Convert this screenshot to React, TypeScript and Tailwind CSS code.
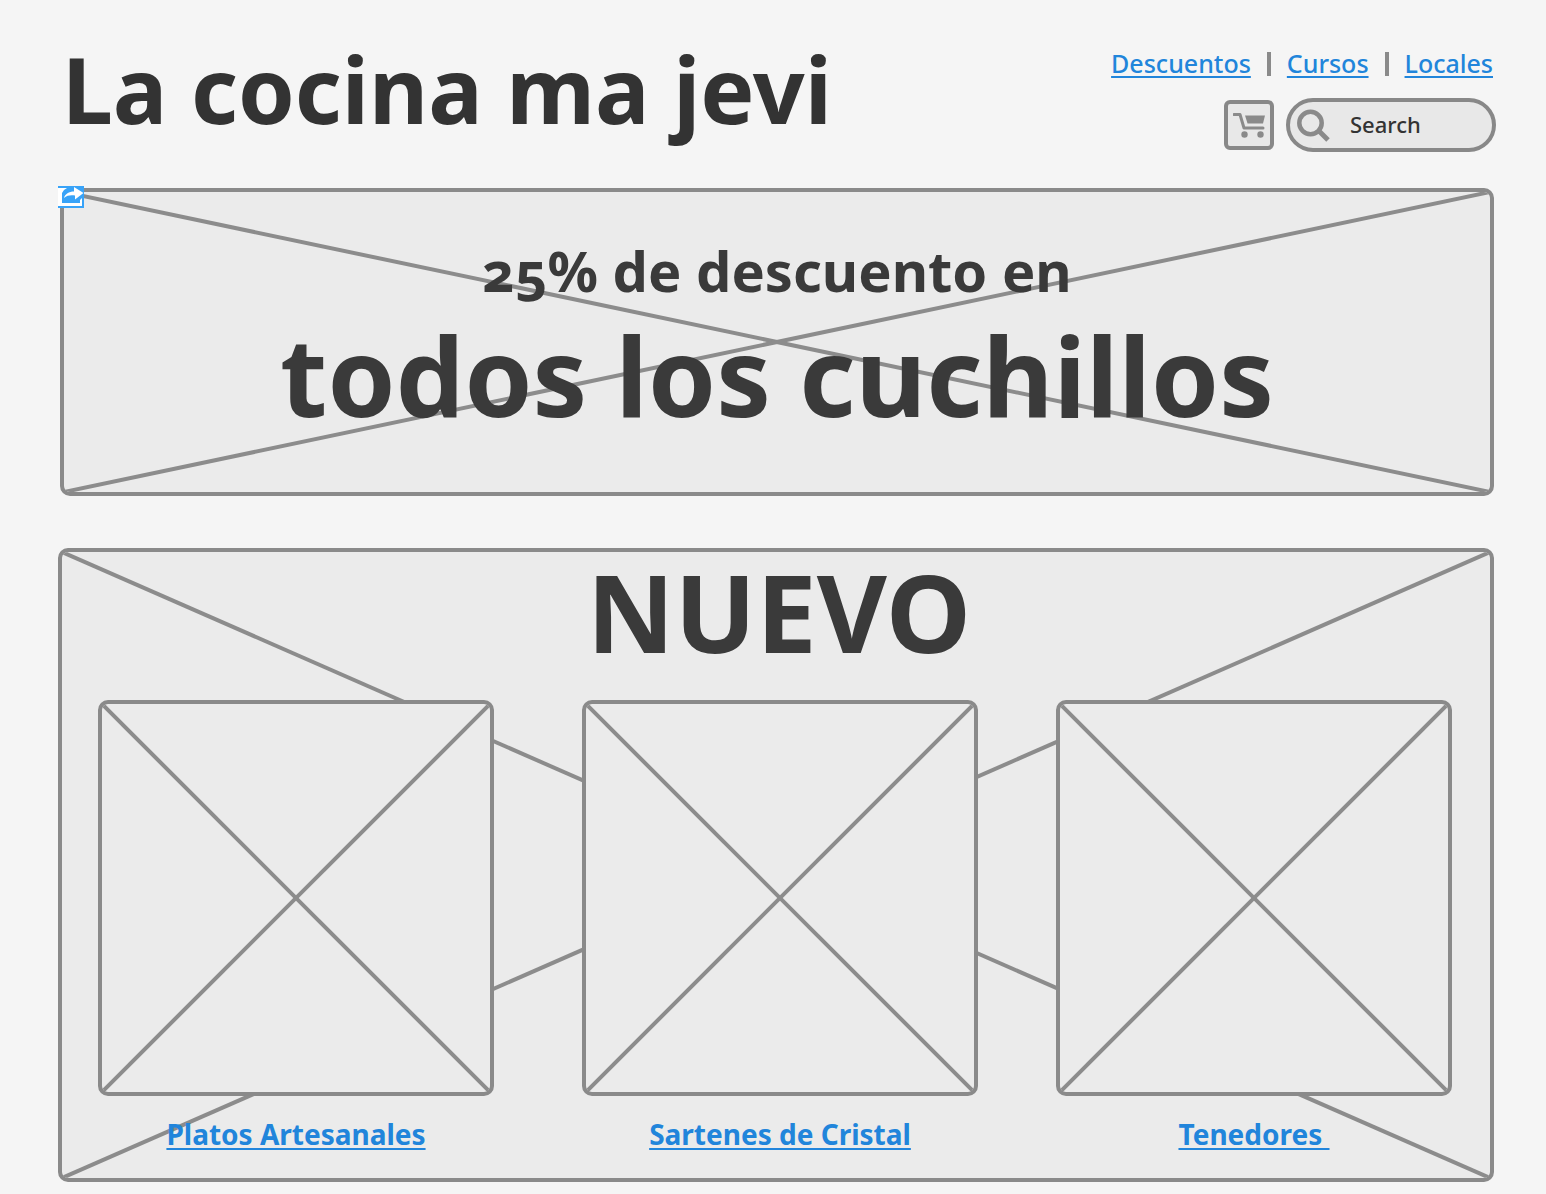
import React from "react";

function Placeholder({ className = "", children }: { className?: string; children?: React.ReactNode }) {
  return (
    <div className={`relative rounded-[10px] border-4 border-[#8a8a8a] bg-[#ebebeb] ${className}`}>
      <svg
        className="absolute inset-0 h-full w-full rounded-md"
        viewBox="0 0 100 100"
        preserveAspectRatio="none"
        stroke="#8c8c8c"
        strokeWidth="4"
        aria-hidden="true"
      >
        <line x1="0" y1="0" x2="100" y2="100" vectorEffect="non-scaling-stroke" />
        <line x1="0" y1="100" x2="100" y2="0" vectorEffect="non-scaling-stroke" />
      </svg>
      {children && <div className="relative">{children}</div>}
    </div>
  );
}

function ShareBadge() {
  return (
    <svg className="absolute -top-0.5 -left-0.5 h-[22px] w-[26px]" viewBox="0 0 26 22" aria-hidden="true">
      <rect width="26" height="22" fill="#38a3f8" />
      <path d="M0 2H9L6 4L4 7V17H22V14L24 12V20H0Z" fill="#fff" />
      <path d="M6 12C7 8 11 5.500 16 5.500V1L25.500 7L17 13.500V9.500C12 9 9 9.500 6 12Z" fill="#fff" />
    </svg>
  );
}

function CartIcon() {
  return (
    <svg width="32" height="26" viewBox="0 0 32 26" fill="#8a8a8a" aria-hidden="true">
      <path d="M1 2.500H7L11 16H30" fill="none" stroke="#8a8a8a" strokeWidth="3" strokeLinecap="round" strokeLinejoin="round" />
      <path d="M12 3.500H32L30 11.500H14.500Z" />
      <circle cx="11.500" cy="22.500" r="3.200" />
      <circle cx="27.500" cy="22.500" r="3.200" />
    </svg>
  );
}

function SearchIcon() {
  return (
    <svg width="34" height="34" viewBox="0 0 34 34" fill="none" stroke="#8a8a8a" aria-hidden="true">
      <circle cx="14.500" cy="15" r="11.200" strokeWidth="4.500" />
      <path d="M22 22L32 32" strokeWidth="5" />
    </svg>
  );
}

const link = "text-[#2185db] underline decoration-2 underline-offset-3";

const products = [
  { name: "Platos Artesanales", place: "col-start-1" },
  { name: "Sartenes de Cristal", place: "col-start-3" },
  { name: "Tenedores ", place: "col-start-5" },
];

export default function App() {
  return (
    <div className="min-h-screen bg-[#f5f5f5] pt-10 pb-3 font-['Noto_Sans',sans-serif] text-[#333333]">
      <header className="flex h-[148px] items-start justify-between pr-[50px] pl-[62px]">
        <h1 className="text-[91px] leading-[98px] font-bold whitespace-nowrap">La cocina ma jevi</h1>
        <div className="flex flex-col items-end">
          <nav className="flex h-12 items-center gap-4 pr-[3px] text-[25px] font-medium">
            <a href="#descuentos" className={link}>Descuentos</a>
            <span className="h-6 w-1 bg-[#8a8a8a]" />
            <a href="#cursos" className={link}>Cursos</a>
            <span className="h-6 w-1 bg-[#8a8a8a]" />
            <a href="#locales" className={link}>Locales</a>
          </nav>
          <div className="mt-2.5 flex items-center gap-3">
            <button
              type="button"
              aria-label="Carrito"
              className="flex size-[50px] items-center justify-center rounded-md border-4 border-[#888888] bg-[#e8e8e8]"
            >
              <CartIcon />
            </button>
            <label className="flex h-[54px] w-[210px] items-center rounded-full border-4 border-[#888888] bg-[#e8e8e8] pl-1.5">
              <SearchIcon />
              <input
                type="search"
                aria-label="Search"
                placeholder="Search"
                className="ml-5 w-32 min-w-0 bg-transparent pb-0.5 text-[22px] font-medium outline-none placeholder:text-[#333333]"
              />
            </label>
          </div>
        </div>
      </header>

      <main className="pr-[52px] pl-[58px]">
        <section className="relative ml-0.5">
          <Placeholder>
            <div className="flex h-[300px] flex-col items-center pt-[42px] text-center font-bold text-[#3a3a3a]">
              <p className="text-[56px] leading-[72px] oldstyle-nums">25% de descuento en</p>
              <h2 className="text-[109px] leading-[138px] whitespace-nowrap">todos los cuchillos</h2>
            </div>
          </Placeholder>
          <ShareBadge />
        </section>

        <Placeholder className="mt-[52px]">
          <div className="pr-[38px] pb-[22px] pl-9">
            <h2 className="pl-2 text-center text-[108px] leading-[120px] font-bold text-[#3a3a3a]">NUEVO</h2>
            <div className="mt-7 grid grid-cols-[396fr_88fr_396fr_78fr_396fr]">
              {products.map((p) => (
                <article key={p.name} className={`${p.place} row-start-1 text-center`}>
                  <Placeholder className="aspect-square" />
                  <a href="#productos" className={`mt-4 inline-block text-[28px] leading-[44px] font-bold whitespace-pre ${link}`}>
                    {p.name}
                  </a>
                </article>
              ))}
            </div>
          </div>
        </Placeholder>
      </main>
    </div>
  );
}
